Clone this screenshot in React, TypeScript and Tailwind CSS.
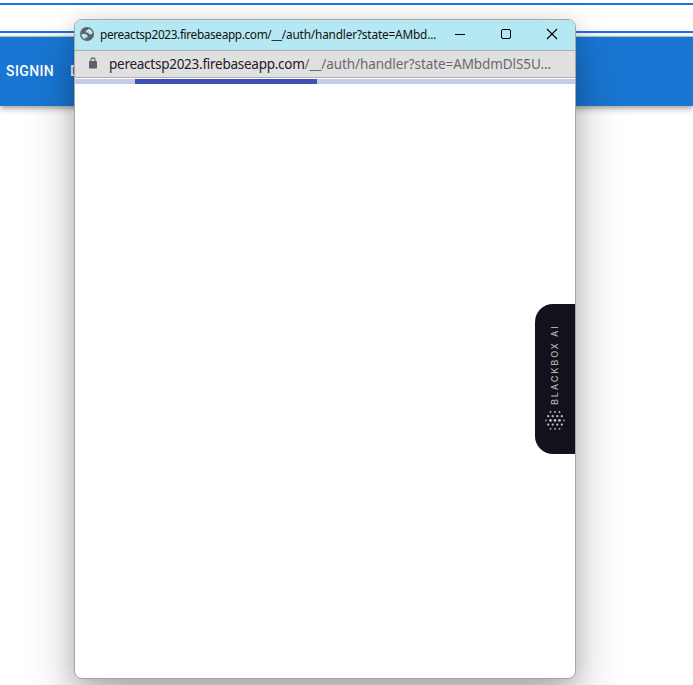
const DOTS: { y: number; xs: number[]; r: number }[] = [
  { y: 2, xs: [5.5, 10, 14.5], r: 0.9 },
  { y: 6.2, xs: [3.2, 7.7, 12.3, 16.8], r: 1.15 },
  { y: 10.4, xs: [5.5, 10, 14.5], r: 1.35 },
  { y: 10.4, xs: [1, 19], r: 0.8 },
  { y: 14.6, xs: [3.2, 7.7, 12.3, 16.8], r: 1.15 },
  { y: 18.8, xs: [5.5, 10, 14.5], r: 0.9 },
];

function Globe() {
  return (
    <svg className="size-[14px] shrink-0" viewBox="2 2 20 20">
      <circle cx="12" cy="12" r="10" fill="#5b6468" />
      <path
        fill="#b5e8f2"
        d="M4 12h4.4c3.41.02 4.92 1.73 4.52 5.13H9.5v2.47A8 8 0 0 1 4 12zM19.95 11.1c-.5 1-1.4 1.5-2.8 1.5-2 0-3.1-.9-3.4-2.6h-3.5c-.3-2.6.8-4 3.5-4 0-.9.3-1.4.9-1.6a8 8 0 0 1 5.3 6.7z"
      />
    </svg>
  );
}

function TitleBar() {
  return (
    <div className="flex h-[30px] shrink-0 items-center bg-[#b5e8f2] pl-[5px]">
      <div className="mb-[2px] flex">
        <Globe />
      </div>
      <div className="mb-[2px] ml-[6px] w-[337px] shrink-0 whitespace-nowrap text-[11.8px] leading-[28px] text-[#111]">
        <span className="tracking-[-0.35px]">pereactsp2023.firebaseapp.com</span>
        <span className="tracking-[-0.16px]">/__/auth/handler?state=AMbd...</span>
      </div>
      <div className="flex h-full flex-1 text-black">
        <svg className="h-[29px] w-[46px]" viewBox="0 0 46 29" fill="none" stroke="currentColor">
          <path d="M18 14.5h10" />
        </svg>
        <svg className="h-[29px] w-[46px]" viewBox="0 0 46 29" fill="none" stroke="currentColor">
          <rect x="18.5" y="9.5" width="9" height="9" rx="1.5" />
        </svg>
        <svg className="h-[29px] w-[46px]" viewBox="0 0 46 29" fill="none" stroke="currentColor" strokeWidth="1.1">
          <path d="M18 9l10 10M28 9L18 19" />
        </svg>
      </div>
    </div>
  );
}

function AddressBar() {
  return (
    <div className="flex h-[28px] shrink-0 items-center border-y border-[#adadad] bg-[#e0e0e0] pl-[14px]">
      <svg className="mb-[2px] h-[12px] w-[8px] shrink-0" viewBox="0 0 8 12">
        <path d="M1.9 5V3a2.1 2.1 0 0 1 4.2 0v2" fill="none" stroke="#5f6368" strokeWidth="1.1" />
        <rect y="4" width="8" height="7.6" rx="0.8" fill="#5f6368" />
      </svg>
      <div className="ml-[12px] whitespace-nowrap text-[13.5px] leading-[26px] text-[#6a6a6a]">
        <span className="tracking-[-0.26px] text-[#202124]">pereactsp2023.firebaseapp.com</span>
        <span className="tracking-[-0.08px]">/__/auth/handler?state=AMbdmDlS5U...</span>
      </div>
    </div>
  );
}

function BlackboxTab() {
  return (
    <div className="mt-[220px] flex h-[150px] w-[40px] flex-col items-center self-end rounded-l-[18px] bg-[#11121b] pt-[20px]">
      <span className="h-[81px] rotate-180 whitespace-nowrap font-['Inter',sans-serif] text-[9px] leading-[12px] font-medium tracking-[1.9px] text-[#b0b0b4] [writing-mode:vertical-rl]">
        BLACKBOX AI
      </span>
      <svg className="mt-[5px] h-[21px] w-[20px] shrink-0" viewBox="0 0 20 21" fill="#c0c0c4">
        {DOTS.map((row) => row.xs.map((x) => <circle key={`${x}-${row.y}`} cx={x} cy={row.y} r={row.r} />))}
      </svg>
    </div>
  );
}

export default function App() {
  return (
    <div className="relative h-[685px] w-[693px] overflow-hidden bg-white font-['Noto_Sans','Open_Sans',sans-serif]">
      <div className="mt-[3px] h-[30px] border-y-2 border-[#1a73e8]" />
      <header className="mt-[3px] flex h-[70px] items-center border-t border-[#b9bcc0] bg-[#1976d2] pl-[6px] font-['Roboto',sans-serif] text-[14px] font-medium tracking-[0.4px] text-white shadow-[0_2px_4px_-1px_rgba(0,0,0,0.2),0_4px_5px_rgba(0,0,0,0.14),0_1px_10px_rgba(0,0,0,0.12)]">
        <span className="w-[64px]">SIGNIN</span>
        <span>D</span>
      </header>

      <div className="absolute top-[19px] left-[74px] flex h-[660px] w-[502px] flex-col overflow-hidden rounded-[8px] border border-[#a6a6a6] bg-white shadow-[0_2px_20px_rgba(0,0,0,0.14),0_28px_48px_rgba(0,0,0,0.27)]">
        <TitleBar />
        <AddressBar />
        <div className="mt-[1px] h-[5px] shrink-0 bg-[#c5cae9] pl-[60px]">
          <div className="h-full w-[182px] bg-[#3f51b5]" />
        </div>
        <BlackboxTab />
      </div>
    </div>
  );
}
